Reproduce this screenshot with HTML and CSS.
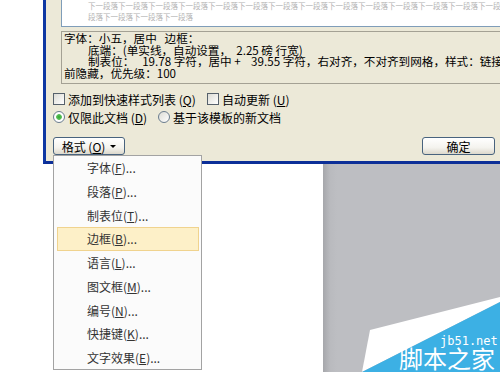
FILE: index.html
```html
<!DOCTYPE html>
<html>
<head>
<meta charset="utf-8">
<link rel="stylesheet" href="styles.css">
</head>
<body>
<div class="dialog">
  <div class="preview">
    <div class="pv-line">下一段落下一段落下一段落下一段落下一段落下一段落下一段落下一段落下一段落下一段落下一段落下一段落下一段落下一段落</div>
    <div class="pv-line">段落下一段落下一段落下一段落</div>
  </div>
  <div class="desc">
    <div class="dl">字体：小五，居中   边框：</div>
    <div class="dl ind">底端：(单实线，自动设置，  2.25 磅 行宽)</div>
    <div class="dl ind">制表位：   19.78 字符，居中 +    39.55 字符，右对齐，不对齐到网格，样式：链接</div>
    <div class="dl">前隐藏，优先级：100</div>
  </div>
  <div class="row">
    <label class="opt w154"><span class="cb"></span>添加到快速样式列表 (<u>Q</u>)</label>
    <label class="opt"><span class="cb"></span>自动更新 (<u>U</u>)</label>
  </div>
  <div class="row r2">
    <label class="opt w105"><span class="rb on"></span>仅限此文档 (<u>D</u>)</label>
    <label class="opt"><span class="rb"></span>基于该模板的新文档</label>
  </div>
  <div class="btns">
    <div class="btn fmt">格式 (<u>O</u>)<span class="caret"></span></div>
    <div class="btn ok">确定</div>
  </div>
</div>
<div class="page">
  <div class="paper"></div>
  <div class="gray"></div>
</div>
<ul class="menu">
  <li>字体(<u>F</u>)...</li>
  <li>段落(<u>P</u>)...</li>
  <li>制表位(<u>T</u>)...</li>
  <li class="hl">边框(<u>B</u>)...</li>
  <li>语言(<u>L</u>)...</li>
  <li>图文框(<u>M</u>)...</li>
  <li>编号(<u>N</u>)...</li>
  <li>快捷键(<u>K</u>)...</li>
  <li>文字效果(<u>E</u>)...</li>
</ul>
<svg class="wm" width="160" height="82" viewBox="340 290 160 82">
  <polygon points="370,330 500,297 500,302 362,372" fill="#ffffff"/>
  <polygon points="362,372 500,302 500,372" fill="#3cb0e4"/>
  <text x="440" y="345" class="wm-en">jb51.net</text>
  <text x="399" y="368" class="wm-cn">脚本之家</text>
</svg>
</body>
</html>
```
FILE: styles.css
```css
body {
  margin: 0;
  width: 500px;
  height: 372px;
  overflow: hidden;
  background: #ffffff;
  position: relative;
  font-family: "Noto Sans CJK SC", sans-serif;
}

.dialog {
  margin-left: 43px;
  height: 164px;
  box-sizing: border-box;
  border-left: 3px solid #0f38a3;
  border-bottom: 3px solid #0c2f98;
  background: #ece9d8;
  overflow: hidden;
}

.preview {
  margin-left: 15px;
  height: 26px;
  background: #ffffff;
  border-left: 1px solid #7f9db9;
  border-bottom: 1px solid #7f9db9;
  padding-left: 26px;
  font-size: 7.5px;
  line-height: 11px;
  color: #b2b2b2;
  white-space: nowrap;
  overflow: hidden;
}

.desc {
  margin: 4px 0 0 15px;
  height: 50px;
  border: 1px solid #a4a194;
  border-right: none;
  padding: 1px 0 0 2px;
  font-size: 11.6px;
  line-height: 11.7px;
  color: #000000;
  overflow: hidden;
}

.dl {
  height: 11.7px;
  white-space: pre;
}

.dl.ind {
  padding-left: 24px;
}

.row {
  display: flex;
  align-items: center;
  height: 16px;
  margin: 7px 0 0 7px;
  font-size: 12px;
  color: #000000;
}

.row.r2 {
  margin-top: 2px;
}

.opt {
  display: flex;
  align-items: center;
  white-space: pre;
}

.w154 { width: 154px; }
.w105 { width: 105px; }

.cb {
  width: 10px;
  height: 10px;
  border: 1px solid #56616b;
  background: linear-gradient(135deg, #dcdcd5, #ffffff);
  margin-right: 3px;
}

.rb {
  width: 10px;
  height: 10px;
  border: 1px solid #6a7c8e;
  border-radius: 50%;
  background: linear-gradient(135deg, #dcdcd5, #ffffff);
  margin-right: 3px;
}

.rb.on {
  background: radial-gradient(circle, #2fa82f 0, #5cc05c 2.5px, #ffffff 3.2px);
}

.btns {
  display: flex;
  justify-content: space-between;
  margin: 12px 0 0 7px;
  padding-right: 5px;
}

.btn {
  height: 18px;
  box-sizing: border-box;
  border: 1px solid #48637e;
  border-radius: 3px;
  background: linear-gradient(#ffffff, #f4f3ee 60%, #dcd8cc);
  font-size: 12px;
  color: #000000;
  display: flex;
  align-items: center;
  justify-content: center;
  white-space: pre;
}

.fmt { width: 72px; }
.ok { width: 73px; }

.caret {
  width: 0;
  height: 0;
  border-left: 3px solid transparent;
  border-right: 3px solid transparent;
  border-top: 3px solid #000000;
  margin-left: 5px;
}

.page {
  display: flex;
  height: 208px;
}

.paper {
  width: 323px;
  background: #ffffff;
}

.gray {
  flex: 1;
  background: linear-gradient(90deg, #a6a7ab, #b9babe 7px, #bdbec2 14px);
}

.menu {
  position: absolute;
  left: 53px;
  top: 155px;
  width: 149px;
  height: 215px;
  box-sizing: border-box;
  border: 1px solid #a3a3a3;
  background: #fbfbfb;
  margin: 0;
  padding: 0;
  list-style: none;
  font-size: 12px;
  color: #333333;
}

.menu li {
  height: 23.75px;
  line-height: 23.75px;
  padding-left: 33px;
  box-sizing: border-box;
}

.menu li.hl {
  margin: 0 2px 0 3px;
  padding-left: 29px;
  border: 1px solid #f0d38e;
  background: #fdf0c8;
  line-height: 21.75px;
}

.wm {
  position: absolute;
  left: 340px;
  top: 290px;
}

.wm-en {
  font-family: "DejaVu Sans Mono", monospace;
  font-size: 12px;
  fill: #ffffff;
}

.wm-cn {
  font-family: "Noto Sans CJK SC", sans-serif;
  font-size: 24px;
  fill: #ffffff;
}
```
